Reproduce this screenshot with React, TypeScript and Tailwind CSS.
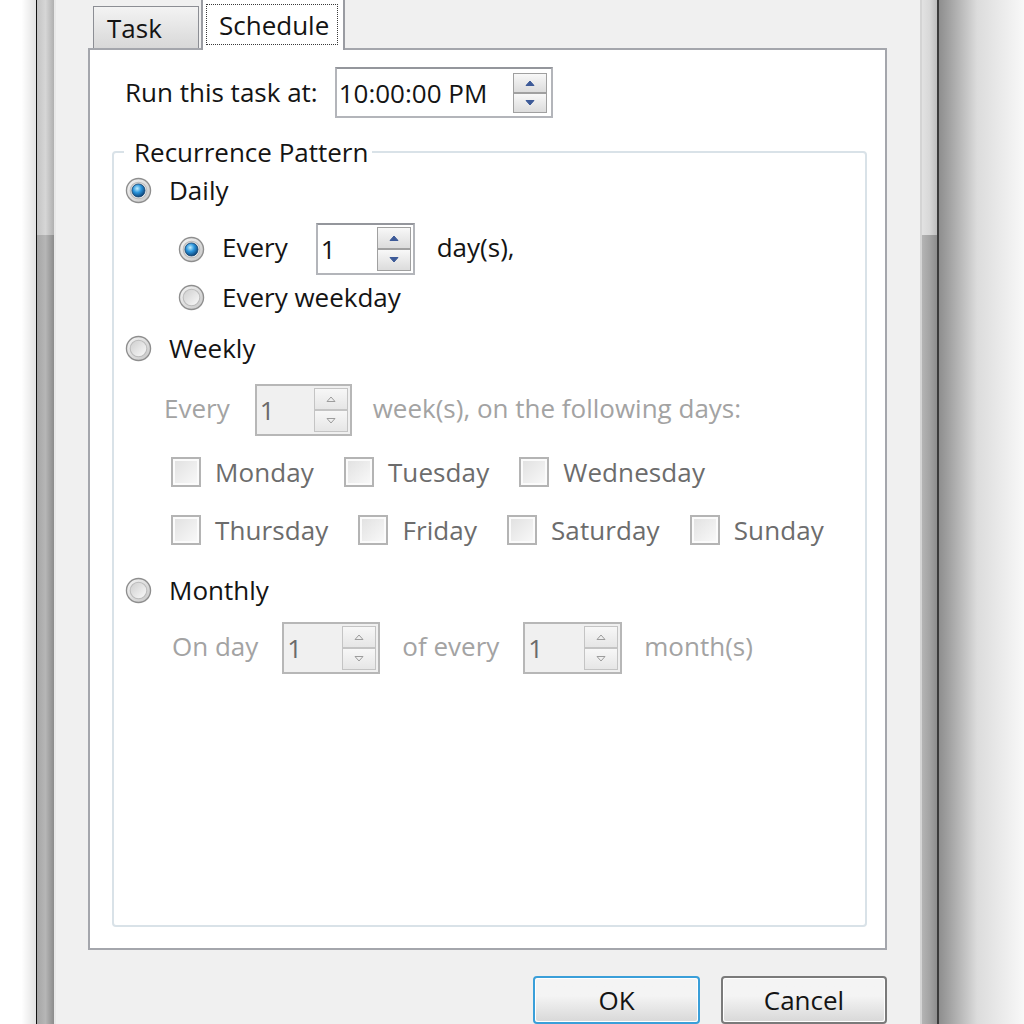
import React from "react";

const TEXT = "text-[#141414]";
const DIM = "text-[#a3a3a3]";

function Radio({ checked }: { checked?: boolean }) {
  return (
    <svg width="27" height="27" viewBox="0 0 26 26" className="shrink-0">
      <defs>
        <linearGradient id="rOuter" x1="0" y1="0" x2="1" y2="1">
          <stop offset="0" stopColor="#f6f6f6" />
          <stop offset="1" stopColor="#c6c6c6" />
        </linearGradient>
        <linearGradient id="rInner" x1="0" y1="0" x2="1" y2="1">
          <stop offset="0" stopColor="#cdcdcd" />
          <stop offset="1" stopColor="#fbfbfb" />
        </linearGradient>
        <radialGradient id="rDot" cx="0.4" cy="0.35" r="0.7">
          <stop offset="0" stopColor="#c2efff" />
          <stop offset="0.45" stopColor="#2b95dc" />
          <stop offset="1" stopColor="#0a3a6c" />
        </radialGradient>
      </defs>
      <circle cx="13" cy="13" r="11.6" fill="url(#rOuter)" stroke="#8e8e8e" strokeWidth="1.3" />
      <circle cx="13" cy="13" r="8" fill="url(#rInner)" stroke="#bcbcbc" strokeWidth="1" />
      {checked && <circle cx="13" cy="13" r="6.3" fill="url(#rDot)" stroke="#1b4a76" strokeWidth="0.8" />}
    </svg>
  );
}

function Check({ label }: { label: string }) {
  return (
    <div className="flex items-center gap-[14px]">
      <div className="h-[30px] w-[30px] border-2 border-[#b4b4b4] bg-[#fbfbfb] p-[2px]">
        <div className="h-full w-full bg-linear-to-br from-[#e2e2e2] to-[#f8f8f8]" />
      </div>
      <span className="tracking-[0.1px] text-[#6c6c6c]">{label}</span>
    </div>
  );
}

function Arrow({ up, disabled }: { up?: boolean; disabled?: boolean }) {
  return (
    <svg width="10" height="6" viewBox="0 0 10 6">
      <path
        d={up ? "M1 5.5 L5 1 L9 5.5 Z" : "M1 0.5 L5 5 L9 0.5 Z"}
        fill={disabled ? "none" : "#3d5a98"}
        stroke={disabled ? "#9c9c9c" : "#3d5a98"}
        strokeWidth="1"
      />
    </svg>
  );
}

function SpinButtons({ disabled, h }: { disabled?: boolean; h: string }) {
  const btn = `flex ${h} w-[34px] items-center justify-center border ${
    disabled ? "border-[#c4c4c4] bg-linear-to-b from-[#f7f7f7] to-[#e6e6e6]" : "border-[#a0a0a0] bg-linear-to-b from-[#f8f8f8] to-[#dcdcdc]"
  }`;
  return (
    <div className="flex flex-col">
      <div className={btn}>
        <Arrow up disabled={disabled} />
      </div>
      <div className={btn}>
        <Arrow disabled={disabled} />
      </div>
    </div>
  );
}

function Spin({ value, className, disabled }: { value: string; className: string; disabled?: boolean }) {
  return (
    <div
      className={`flex h-[52px] shrink-0 items-center justify-between border-2 pl-[3px] pr-[2px] ${className} ${
        disabled ? "border-[#b7b7b7] bg-[#f0f0f0] text-[#6a6a6a]" : "border-[#b3b5ba] border-t-[#94969c] bg-white text-[#141414]"
      }`}
    >
      <span>{value}</span>
      <SpinButtons disabled={disabled} h="h-[22px]" />
    </div>
  );
}

function Tabs() {
  return (
    <div className="flex h-[48px] items-start gap-[2px] pl-[5px]">
      <div className="mt-[6px] flex h-[42px] w-[106px] items-center border border-b-0 border-[#8c8e94] bg-linear-to-b from-[#f3f3f3] to-[#d8d8d8] pl-[13px]">
        Task
      </div>
      <div className="relative z-10 -mt-[2px] h-[52px] w-[144px] border-2 border-b-0 border-[#9a9ca2] bg-white pt-[4px] pl-[3px]">
        <div className="flex h-[41px] w-[132px] items-center border border-dotted border-[#3a3a3a] pl-[12px]">
          Schedule
        </div>
      </div>
    </div>
  );
}

function Recurrence() {
  return (
    <fieldset className="mt-[16px] ml-[22px] mr-[18px] mb-[21px] flex-1 rounded-[4px] border-2 border-[#d9e2e8] pl-[10px]">
      <legend className="h-[36px] pl-[10px] pr-[4px] leading-[36px]">Recurrence Pattern</legend>
      <div className="flex flex-col">
        <div className="ml-[1px] flex h-[40px] items-center gap-[17px]">
          <Radio checked />
          <span>Daily</span>
        </div>
        <div className="mt-[13px] ml-[54px] flex h-[52px] items-center">
          <Radio checked />
          <span className="ml-[17px] -mt-[4px]">Every</span>
          <Spin value="1" className="ml-[28px] w-[99px]" />
          <span className="ml-[22px] -mt-[4px]">day(s),</span>
        </div>
        <div className="mt-[2px] ml-[54px] flex h-[40px] items-center gap-[17px]">
          <Radio />
          <span>Every weekday</span>
        </div>
        <div className="mt-[11px] ml-[1px] flex h-[40px] items-center gap-[17px]">
          <Radio />
          <span>Weekly</span>
        </div>
        <div className="mt-[16px] ml-[40px] flex h-[52px] items-center">
          <span className={`${DIM} -mt-[4px]`}>Every</span>
          <Spin value="1" className="ml-[25px] w-[97px]" disabled />
          <span className={`${DIM} ml-[21px] -mt-[4px]`}>week(s), on the following days:</span>
        </div>
        <div className="mt-[16px] ml-[47px] flex h-[40px] items-center gap-[30px]">
          <Check label="Monday" />
          <Check label="Tuesday" />
          <Check label="Wednesday" />
        </div>
        <div className="mt-[18px] ml-[47px] flex h-[40px] items-center gap-[30px]">
          <Check label="Thursday" />
          <Check label="Friday" />
          <Check label="Saturday" />
          <Check label="Sunday" />
        </div>
        <div className="mt-[20px] ml-[1px] flex h-[40px] items-center gap-[17px]">
          <Radio />
          <span>Monthly</span>
        </div>
        <div className="mt-[12px] ml-[48px] flex h-[52px] items-center">
          <span className={`${DIM} -mt-[4px]`}>On day</span>
          <Spin value="1" className="ml-[24px] w-[98px]" disabled />
          <span className={`${DIM} ml-[22px] -mt-[4px]`}>of every</span>
          <Spin value="1" className="ml-[24px] w-[99px]" disabled />
          <span className={`${DIM} ml-[22px] -mt-[4px]`}>month(s)</span>
        </div>
      </div>
    </fieldset>
  );
}

function Button({ label, primary }: { label: string; primary?: boolean }) {
  return (
    <div
      className={`flex h-[48px] items-center justify-center rounded-[4px] border-2 ${
        primary ? "w-[167px] border-[#3a9fd9]" : "w-[166px] border-[#7a7a7a]"
      }`}
    >
      <div className="flex h-full w-full items-center justify-center rounded-[3px] border border-white bg-linear-to-b from-[#f4f4f4] from-40% to-[#d9d9d9]">
        {label}
      </div>
    </div>
  );
}

export default function App() {
  return (
    <div className={`flex h-[1024px] w-[1024px] overflow-hidden bg-white font-['Open_Sans',sans-serif] text-[26px] leading-none ${TEXT}`}>
      {/* page behind the window */}
      <div className="w-[36px] shrink-0 bg-linear-to-r from-white from-60% to-[#e2e2e2]" />
      <div className="w-[1px] shrink-0 bg-[#111]" />

      {/* left window frame */}
      <div className="flex w-[19px] shrink-0 flex-col border-r-2 border-[#e8e8e8]">
        <div className="h-[235px] bg-linear-to-r from-[#c4c4c4] via-[#d6d6d6] to-[#b0b0b0]" />
        <div className="flex-1 bg-linear-to-r from-[#a6a6a6] via-[#b6b6b6] to-[#8c8c8c]" />
      </div>

      {/* dialog body */}
      <div className="flex w-[864px] shrink-0 flex-col bg-[#f0f0f0] pl-[32px] pr-[33px]">
        <Tabs />
        <div className="flex h-[903px] flex-col border-2 border-[#a4a6ac] bg-white">
          <div className="mt-[17px] flex items-center pl-[35px]">
            <span className="-mt-[2px]">Run this task at:</span>
            <div className="ml-[17px] flex h-[51px] w-[218px] items-center justify-between border-2 border-[#b3b5ba] border-t-[#94969c] bg-white pl-[2px] pr-[4px]">
              <span>10:00:00 PM</span>
              <div className="flex flex-col">
                <div className="flex h-[20px] w-[34px] items-center justify-center border border-[#a0a0a0] bg-linear-to-b from-[#f8f8f8] to-[#dcdcdc]">
                  <Arrow up />
                </div>
                <div className="flex h-[20px] w-[34px] items-center justify-center border border-[#a0a0a0] bg-linear-to-b from-[#f8f8f8] to-[#dcdcdc]">
                  <Arrow />
                </div>
              </div>
            </div>
          </div>
          <Recurrence />
        </div>
        <div className="mt-[26px] flex justify-end gap-[21px]">
          <Button label="OK" primary />
          <Button label="Cancel" />
        </div>
      </div>

      {/* right window frame */}
      <div className="flex w-[17px] shrink-0 flex-col border-l-2 border-[#d4d4d4]">
        <div className="h-[235px] bg-linear-to-r from-[#e2e2e2] via-[#d8d8d8] to-[#bdbdbd]" />
        <div className="flex-1 bg-linear-to-r from-[#b4b4b4] via-[#a4a4a4] to-[#8e8e8e]" />
      </div>
      <div className="w-[2px] shrink-0 bg-[#3c3c3c]" />
      {/* drop shadow */}
      <div className="flex-1 bg-linear-to-r from-[#8e8e8e] via-[#dcdcdc] via-45% to-[#f8f8f8]" />
    </div>
  );
}
